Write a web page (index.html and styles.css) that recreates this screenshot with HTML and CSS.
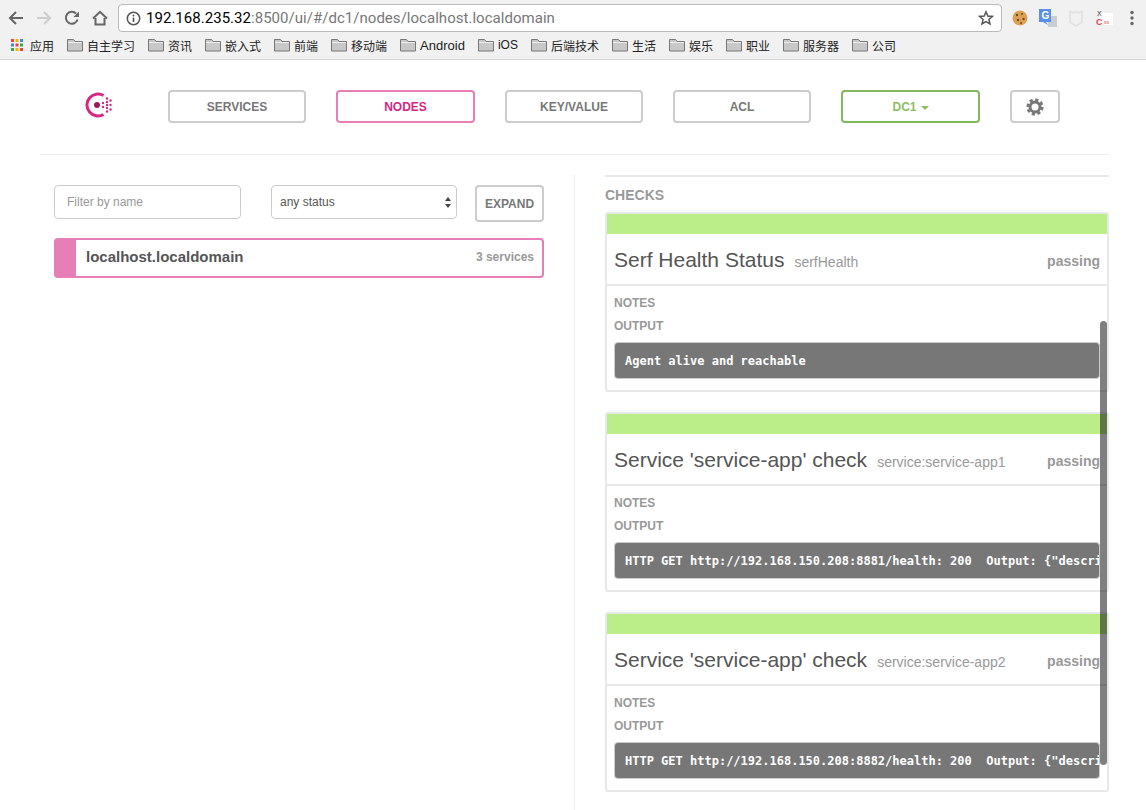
FILE: index.html
```html
<!DOCTYPE html>
<html lang="en">
<head>
    <meta charset="UTF-8">
    <title>Consul</title>
    <link rel="stylesheet" href="styles.css">
</head>

<body>
<div class="chrome">
    <div class="toolbar">
        <svg class="tool" width="16" height="16" viewBox="0 0 16 16"><path d="M15 8H2M8 2 2 8l6 6" fill="none" stroke="#666" stroke-width="2"/></svg>
        <svg class="tool" width="16" height="16" viewBox="0 0 16 16"><path d="M1 8h13M8 2l6 6-6 6" fill="none" stroke="#ccc" stroke-width="2"/></svg>
        <svg class="tool" width="16" height="16" viewBox="0 0 16 16"><path d="M13.6 9.5A6 6 0 1 1 12.2 3.6" fill="none" stroke="#666" stroke-width="2"/><path d="M9.5 7 15 7 15 1.5z" fill="#666"/></svg>
        <svg class="tool" width="16" height="16" viewBox="0 0 16 16"><path d="M3.5 8v6.5h9V8M1 8.5 8 1.8l7 6.7" fill="none" stroke="#666" stroke-width="2"/></svg>
        <div class="address">
            <svg width="15" height="15" viewBox="0 0 15 15"><circle cx="7.5" cy="7.5" r="6.2" fill="none" stroke="#555" stroke-width="1.5"/><path d="M7.5 6.5v4.5" stroke="#555" stroke-width="1.6"/><circle cx="7.5" cy="4.4" r="1" fill="#555"/></svg>
            <div class="url"><b>192.168.235.32</b>:8500/ui/#/dc1/nodes/localhost.localdomain</div>
            <svg width="16" height="16" viewBox="0 0 16 16"><path d="M8 1.8 9.8 6l4.6.4-3.5 3 1.1 4.5L8 11.5l-4 2.4 1.1-4.5-3.5-3L6.200 6z" fill="none" stroke="#555" stroke-width="1.500"/></svg>
        </div>
        <div class="extensions">
            <svg width="18" height="18" viewBox="0 0 18 18"><circle cx="9" cy="9" r="7.500" fill="#dba256"/><circle cx="6" cy="6" r="1.200" fill="#7a4a1c"/><circle cx="11" cy="5" r="1" fill="#7a4a1c"/><circle cx="12.500" cy="10" r="1.200" fill="#7a4a1c"/><circle cx="7" cy="11" r="1.200" fill="#7a4a1c"/><circle cx="10" cy="14" r="1" fill="#7a4a1c"/></svg>
            <svg width="18" height="18" viewBox="0 0 18 18"><path d="M9 7h9v11H9z" fill="#c9ced3"/><path d="M0 0h12v13H7l2 3-5-3H0z" fill="#5b90ea"/><text x="2.500" y="10" class="ext-g">G</text></svg>
            <svg width="18" height="18" viewBox="0 0 18 18"><path d="M3 2l3 2 3-1 3 1 3-2v11l-6 4-6-4z" fill="none" stroke="#e3e3e3" stroke-width="2"/></svg>
            <svg width="18" height="18" viewBox="0 0 18 18"><rect x="5" y="4" width="13" height="12" fill="#fff"/><text x="2" y="7" class="ext-x">X</text><text x="1" y="16" class="ext-c">C</text><text x="9" y="15" class="ext-s">ss</text></svg>
            <svg width="18" height="18" viewBox="0 0 18 18"><circle cx="9" cy="3.500" r="1.700" fill="#666"/><circle cx="9" cy="9" r="1.700" fill="#666"/><circle cx="9" cy="14.500" r="1.700" fill="#666"/></svg>
        </div>
    </div>
    <div class="bookmarks">
        <div class="mark">
            <svg class="apps" width="12" height="12" viewBox="0 0 12 12">
                <path d="M0 0h3v3H0z" fill="#e8453c"/><path d="M4.500 0h3v3h-3z" fill="#f4b400"/><path d="M9 0h3v3H9z" fill="#4285f4"/>
                <path d="M0 4.500h3v3H0z" fill="#4285f4"/><path d="M4.500 4.500h3v3h-3z" fill="#e8453c"/><path d="M9 4.500h3v3H9z" fill="#34a853"/>
                <path d="M0 9h3v3H0z" fill="#34a853"/><path d="M4.500 9h3v3h-3z" fill="#f4b400"/><path d="M9 9h3v3H9z" fill="#e8453c"/>
            </svg>
            应用
        </div>
        <div class="mark"><svg class="folder" width="16" height="14" viewBox="0 0 16 14"><path d="M.5 13V1.500h6l1.500 2h7.500V13z" fill="#c8c8c8" stroke="#777"/><path d="M1 4.500h14" stroke="#eee"/></svg>自主学习</div>
        <div class="mark"><svg class="folder" width="16" height="14" viewBox="0 0 16 14"><path d="M.5 13V1.500h6l1.500 2h7.500V13z" fill="#c8c8c8" stroke="#777"/><path d="M1 4.500h14" stroke="#eee"/></svg>资讯</div>
        <div class="mark"><svg class="folder" width="16" height="14" viewBox="0 0 16 14"><path d="M.5 13V1.500h6l1.500 2h7.500V13z" fill="#c8c8c8" stroke="#777"/><path d="M1 4.500h14" stroke="#eee"/></svg>嵌入式</div>
        <div class="mark"><svg class="folder" width="16" height="14" viewBox="0 0 16 14"><path d="M.5 13V1.500h6l1.500 2h7.500V13z" fill="#c8c8c8" stroke="#777"/><path d="M1 4.500h14" stroke="#eee"/></svg>前端</div>
        <div class="mark"><svg class="folder" width="16" height="14" viewBox="0 0 16 14"><path d="M.5 13V1.500h6l1.500 2h7.500V13z" fill="#c8c8c8" stroke="#777"/><path d="M1 4.500h14" stroke="#eee"/></svg>移动端</div>
        <div class="mark latin"><svg class="folder" width="16" height="14" viewBox="0 0 16 14"><path d="M.5 13V1.500h6l1.500 2h7.500V13z" fill="#c8c8c8" stroke="#777"/><path d="M1 4.500h14" stroke="#eee"/></svg>Android</div>
        <div class="mark"><svg class="folder" width="16" height="14" viewBox="0 0 16 14"><path d="M.5 13V1.500h6l1.500 2h7.500V13z" fill="#c8c8c8" stroke="#777"/><path d="M1 4.500h14" stroke="#eee"/></svg>iOS</div>
        <div class="mark"><svg class="folder" width="16" height="14" viewBox="0 0 16 14"><path d="M.5 13V1.500h6l1.500 2h7.500V13z" fill="#c8c8c8" stroke="#777"/><path d="M1 4.500h14" stroke="#eee"/></svg>后端技术</div>
        <div class="mark"><svg class="folder" width="16" height="14" viewBox="0 0 16 14"><path d="M.5 13V1.500h6l1.500 2h7.500V13z" fill="#c8c8c8" stroke="#777"/><path d="M1 4.500h14" stroke="#eee"/></svg>生活</div>
        <div class="mark"><svg class="folder" width="16" height="14" viewBox="0 0 16 14"><path d="M.5 13V1.500h6l1.500 2h7.500V13z" fill="#c8c8c8" stroke="#777"/><path d="M1 4.500h14" stroke="#eee"/></svg>娱乐</div>
        <div class="mark"><svg class="folder" width="16" height="14" viewBox="0 0 16 14"><path d="M.5 13V1.500h6l1.500 2h7.500V13z" fill="#c8c8c8" stroke="#777"/><path d="M1 4.500h14" stroke="#eee"/></svg>职业</div>
        <div class="mark"><svg class="folder" width="16" height="14" viewBox="0 0 16 14"><path d="M.5 13V1.500h6l1.500 2h7.500V13z" fill="#c8c8c8" stroke="#777"/><path d="M1 4.500h14" stroke="#eee"/></svg>服务器</div>
        <div class="mark"><svg class="folder" width="16" height="14" viewBox="0 0 16 14"><path d="M.5 13V1.500h6l1.500 2h7.500V13z" fill="#c8c8c8" stroke="#777"/><path d="M1 4.500h14" stroke="#eee"/></svg>公司</div>
    </div>
</div>

<div class="nav">
    <svg class="logo" width="30" height="26" viewBox="0 0 30 26">
        <path d="M19.500 3.500A11 11 0 1 0 19.500 22.500" fill="none" stroke="#d62783" stroke-width="3"/>
        <circle cx="13" cy="13" r="3" fill="#961d59"/>
        <g fill="#d62783">
            <circle cx="19" cy="11" r="1.200"/><circle cx="19" cy="15" r="1.200"/>
            <circle cx="23" cy="6.500" r="1.200"/><circle cx="23" cy="10" r="1.200"/><circle cx="23" cy="13" r="1.200"/><circle cx="23" cy="16" r="1.200"/><circle cx="23" cy="19.500" r="1.200"/>
            <circle cx="26.500" cy="8.500" r="1.200"/><circle cx="26.500" cy="13" r="1.200"/><circle cx="26.500" cy="17.500" r="1.200"/>
        </g>
    </svg>
    <a class="nav-btn w138">SERVICES</a>
    <a class="nav-btn w139 pink">NODES</a>
    <a class="nav-btn w138">KEY/VALUE</a>
    <a class="nav-btn w138">ACL</a>
    <a class="nav-btn w139 green">DC1<span class="caret"></span></a>
    <a class="nav-btn w50">
        <svg width="18" height="18" viewBox="0 0 18 18"><circle cx="9" cy="9" r="5" fill="none" stroke="#777" stroke-width="3"/><circle cx="9" cy="9" r="7.300" fill="none" stroke="#777" stroke-width="2.600" stroke-dasharray="3.200 2.530"/></svg>
    </a>
</div>

<div class="content">
    <div class="left">
        <div class="filters">
            <input class="filter" type="text" placeholder="Filter by name">
            <div class="status">
                any status
                <svg width="6" height="11" viewBox="0 0 6 11"><path d="M3 0l3 4H0zM3 11 0 7h6z" fill="#444"/></svg>
            </div>
            <a class="expand">EXPAND</a>
        </div>
        <div class="node">
            <div class="node-stripe"></div>
            <div class="node-name">localhost.localdomain</div>
            <div class="node-count">3 services</div>
        </div>
    </div>

    <div class="right">
        <h4>CHECKS</h4>

        <div class="check">
            <div class="check-bar"></div>
            <div class="check-head">
                <span class="check-title">Serf Health Status</span>
                <span class="check-id">serfHealth</span>
                <span class="check-state">passing</span>
            </div>
            <div class="check-body">
                <div class="label">NOTES</div>
                <div class="label">OUTPUT</div>
                <pre>Agent alive and reachable</pre>
            </div>
        </div>

        <div class="check">
            <div class="check-bar"></div>
            <div class="check-head">
                <span class="check-title">Service 'service-app' check</span>
                <span class="check-id">service:service-app1</span>
                <span class="check-state">passing</span>
            </div>
            <div class="check-body">
                <div class="label">NOTES</div>
                <div class="label">OUTPUT</div>
                <pre>HTTP GET http://192.168.150.208:8881/health: 200  Output: {"description":"service-app"}</pre>
            </div>
        </div>

        <div class="check">
            <div class="check-bar"></div>
            <div class="check-head">
                <span class="check-title">Service 'service-app' check</span>
                <span class="check-id">service:service-app2</span>
                <span class="check-state">passing</span>
            </div>
            <div class="check-body">
                <div class="label">NOTES</div>
                <div class="label">OUTPUT</div>
                <pre>HTTP GET http://192.168.150.208:8882/health: 200  Output: {"description":"service-app"}</pre>
            </div>
        </div>

        <div class="scroll-thumb"></div>
    </div>
</div>
</body>
</html>
```

FILE: styles.css
```css
* { box-sizing: border-box; }
html, body { height: 100%; }
body {
    margin: 0;
    height: 810px;
    overflow: hidden;
    background: #fff;
    font-family: "Liberation Sans", "Noto Sans CJK SC", sans-serif;
    color: #777;
}

/* browser bar */
.chrome {
    height: 60px;
    background: #f1f1f1;
    border-bottom: 1px solid #d4d4d4;
}
.toolbar {
    display: flex;
    align-items: center;
    height: 36px;
    padding: 0 5px 0 8px;
}
.tool { margin-right: 12px; flex: none; }
.address {
    display: flex;
    align-items: center;
    flex: none;
    width: 884px;
    height: 28px;
    margin-left: -2px;
    padding: 0 7px 0 7px;
    background: #fff;
    border: 1px solid #bbb;
    border-radius: 4px;
}
.url {
    flex: 1;
    padding-left: 5px;
    font-family: "Roboto", "Liberation Sans", sans-serif;
    font-size: 15px;
    letter-spacing: .03px;
    color: #777;
}
.url b { font-weight: 400; color: #000; }
.extensions {
    display: flex;
    gap: 10px;
    margin-left: 9px;
}
.ext-g { font-size: 10px; font-weight: bold; fill: #fff; font-family: "Liberation Sans", sans-serif; }
.ext-x { font-size: 7px; fill: #333; font-family: "Liberation Sans", sans-serif; }
.ext-c { font-size: 9px; font-weight: bold; fill: #e0474c; font-family: "Liberation Sans", sans-serif; }
.ext-s { font-size: 5px; fill: #e0474c; font-family: "Liberation Sans", sans-serif; }

.bookmarks {
    display: flex;
    align-items: center;
    gap: 13px;
    height: 18px;
    padding-left: 11px;
    font-size: 12px;
    color: #222;
}
.mark { display: flex; align-items: center; white-space: nowrap; }
.latin { font-size: 13px; }
.apps { margin-right: 7px; }
.folder { margin-right: 4px; }

/* main nav */
.nav {
    display: flex;
    align-items: center;
    height: 95px;
    margin: 0 37px 0 40px;
    padding: 0 0 1px 44px;
    border-bottom: 1px solid #eee;
}
.logo { margin: 0 54px 4px 0; flex: none; }
.nav-btn {
    display: flex;
    align-items: center;
    justify-content: center;
    height: 33px;
    margin-right: 30px;
    border: 2px solid #ccc;
    border-radius: 4px;
    font-size: 12px;
    font-weight: bold;
    color: #777;
}
.w138 { width: 138px; }
.w139 { width: 139px; }
.w50 { width: 50px; }
.pink { border-color: #e67fb5; color: #d62783; }
.green { border-color: #82b85e; color: #8cc063; }
.caret {
    margin-left: 4px;
    margin-top: 2px;
    border-top: 4px solid #8cc063;
    border-left: 4px solid transparent;
    border-right: 4px solid transparent;
}

/* columns */
.content {
    display: flex;
    height: 635px;
    margin: 20px 37px 0 40px;
}
.left {
    width: 535px;
    padding: 10px 30px 0 14px;
    border-right: 1px solid #eee;
}
.filters {
    display: flex;
    align-items: flex-start;
    height: 53px;
}
.filter {
    width: 187px;
    height: 34px;
    margin-right: 30px;
    padding: 0 12px;
    border: 1px solid #ccc;
    border-radius: 4px;
    outline: none;
    font-family: inherit;
    font-size: 12px;
}
.filter::placeholder { color: #999; }
.status {
    display: flex;
    align-items: center;
    justify-content: space-between;
    width: 186px;
    height: 34px;
    margin-right: 18px;
    padding: 0 5px 0 8px;
    border: 1px solid #ccc;
    border-radius: 4px;
    font-size: 12px;
    color: #555;
}
.expand {
    display: flex;
    align-items: center;
    justify-content: center;
    width: 69px;
    height: 37px;
    border: 2px solid #ccc;
    border-radius: 4px;
    font-size: 12px;
    font-weight: bold;
    color: #777;
}
.node {
    display: flex;
    align-items: center;
    height: 40px;
    border: 2px solid #e67fb5;
    border-radius: 4px;
}
.node-stripe {
    align-self: stretch;
    width: 20px;
    background: #e67fb5;
}
.node-name {
    flex: 1;
    padding: 0 0 3px 10px;
    font-size: 15px;
    font-weight: bold;
    color: #555;
}
.node-count {
    padding: 0 8px 2px 0;
    font-size: 12px;
    font-weight: bold;
    color: #999;
}

.right {
    position: relative;
    width: 504px;
    margin-left: 30px;
    overflow: hidden;
    border-top: 2px solid #e8e8e8;
}
.right h4 {
    margin: 10px 0 9px;
    font-size: 14px;
    line-height: 16px;
    font-weight: bold;
    color: #999;
}
.check {
    height: 180px;
    margin-bottom: 20px;
    border: 2px solid #e8e8e8;
    border-radius: 3px;
}
.check-bar {
    height: 20px;
    background: #bbed88;
}
.check-head {
    display: flex;
    align-items: center;
    height: 52px;
    padding: 2px 7px 0;
    border-bottom: 2px solid #e8e8e8;
    white-space: nowrap;
}
.check-title {
    font-size: 21px;
    color: #555;
}
.check-id {
    flex: 1;
    margin-left: 10px;
    padding-top: 4px;
    font-size: 14px;
    color: #999;
}
.check-state {
    padding-top: 2px;
    font-size: 14px;
    font-weight: bold;
    color: #999;
}
.check-body { padding: 9px 7px 0; }
.label {
    height: 23px;
    font-size: 12px;
    line-height: 16px;
    font-weight: bold;
    color: #999;
}
pre {
    height: 37px;
    margin: 1px 0 0;
    padding: 11px 10px;
    overflow: hidden;
    background: #777;
    border: 1px solid #ccc;
    border-radius: 4px;
    font-family: "DejaVu Sans Mono", monospace;
    font-size: 12px;
    line-height: 14px;
    font-weight: bold;
    color: #fff;
}
.scroll-thumb {
    position: absolute;
    top: 144px;
    right: 2px;
    width: 7px;
    height: 444px;
    border-radius: 4px;
    background: rgba(0,0,0,.5);
}
```
